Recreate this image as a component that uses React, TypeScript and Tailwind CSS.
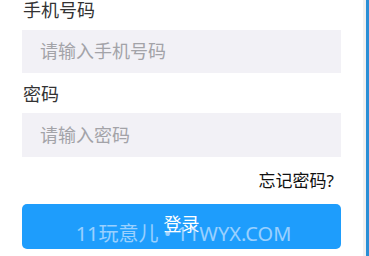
export default function App() {
  return (
    <div
      className="relative w-[369px] h-[256px] overflow-hidden bg-white flex"
      style={{ fontFamily: '"Noto Sans", "Noto Sans CJK SC", sans-serif' }}
    >
      <div className="w-[363px] shrink-0 px-[22px] flex flex-col">
        {/* Phone */}
        <div className="h-[21px] leading-[21px] text-[18px] text-[#333] pl-[1px]">手机号码</div>
        <div className="mt-[9px] h-[43px] bg-[#f2f1f6] flex items-center pl-[18px] text-[18px] text-[#a3a3a8]">
          请输入手机号码
        </div>

        {/* Password */}
        <div className="mt-[10px] h-[22px] leading-[22px] text-[18px] text-[#333] pl-[1px]">密码</div>
        <div className="mt-[8px] h-[44px] bg-[#f2f1f6] flex items-center pl-[18px] text-[18px] text-[#a3a3a8]">
          请输入密码
        </div>

        <div className="mt-[13px] h-[22px] leading-[22px] text-right text-[17px] text-[#111] pr-[7px]">
          忘记密码?
        </div>

        <button className="mt-[12px] h-[45px] w-full rounded-[5px] bg-[#1e9dfc] text-white text-[18px] flex items-center justify-center pb-[4px]">
          登录
        </button>
      </div>

      {/* right edge */}
      <div className="w-[3px] h-full bg-[#f1f1f1]" />
      <div className="w-[3px] h-full bg-[#2a8fd6]" />

      {/* watermark */}
      <div className="absolute left-0 right-0 top-[220px] text-center text-[20px] leading-[28px] text-[#cfe6ff]/70 pointer-events-none pr-[2px]">
        11玩意儿 • 11WYX.COM
      </div>
    </div>
  );
}
